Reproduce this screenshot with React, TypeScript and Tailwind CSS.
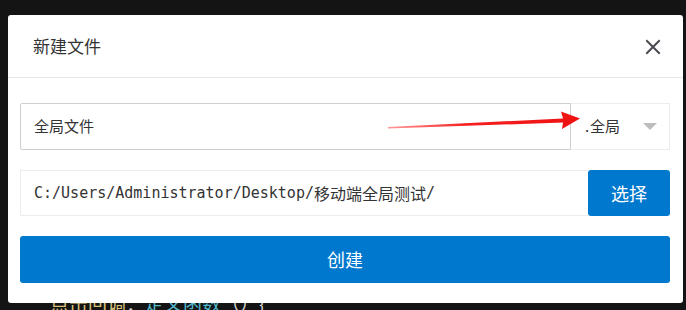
import React from "react";

export default function App() {
  return (
    <div className="relative w-[686px] h-[310px] overflow-hidden bg-[#141414]" style={{ fontFamily: '"Noto Sans", "Noto Sans CJK SC", sans-serif' }}>
      {/* background code editor content */}
      <div className="flex flex-col pl-[50px] pt-[291px] text-[19px] leading-[24px]" style={{ fontFamily: '"Noto Sans CJK SC", sans-serif' }}>
        <div className="flex whitespace-nowrap">
          <span className="text-[#d8c27c]">点击回调</span>
          <span className="text-[#d4d4d4]">：</span>
          <span className="text-[#4fb7c9]">定义函数</span>
          <span className="text-[#d4d4d4]">（）{"{"}</span>
        </div>
      </div>

      {/* modal */}
      <div className="absolute left-[8px] top-[15px] w-[675px] h-[288px] bg-white rounded-[3px] flex flex-col">
        <div className="h-[63px] flex items-center justify-between pl-[25px] pr-[22px] border-b border-[#e8e8e8]">
          <span className="text-[17px] text-[#333]" style={{ fontFamily: '"Noto Sans CJK SC", sans-serif' }}>新建文件</span>
          <svg width="16" height="16" viewBox="0 0 16 16" className="mt-[1px]">
            <path d="M2 2 L14 14 M14 2 L2 14" stroke="#4a4a52" strokeWidth="2" strokeLinecap="square" />
          </svg>
        </div>
        <div className="flex flex-col gap-[20px] px-[12px] pt-[25px] pb-[20px]">
          <div className="flex h-[47px] w-[650px]">
            <div className="flex-1 flex items-center pl-[13px] border border-[#cfcfcf] rounded-l-[2px] text-[15px] text-[#333]" style={{ fontFamily: '"Noto Sans CJK SC", sans-serif' }}>
              全局文件
            </div>
            <div className="w-[99px] flex items-center justify-between pl-[14px] pr-[12px] border border-l-0 border-[#ececec] text-[15px] text-[#333]" style={{ fontFamily: '"Noto Sans CJK SC", sans-serif' }}>
              <span>.&#8202;全局</span>
              <svg width="14" height="8" viewBox="0 0 14 8" className="mt-[1px]">
                <polygon points="0,0 14,0 7,7" fill="#bdbdbd" />
              </svg>
            </div>
          </div>
          <div className="flex h-[46px] w-[650px]">
            <div className="flex-1 flex items-center pl-[13px] border border-r-0 border-[#ececec] text-[15px] text-[#333]" style={{ fontFamily: '"DejaVu Sans Mono", "Noto Sans CJK SC", monospace' }}>
              C:/Users/Administrator/Desktop/<span className="text-[16px]" style={{ fontFamily: '"Noto Sans CJK SC", sans-serif' }}>移动端全局测试</span>/
            </div>
            <button className="w-[82px] bg-[#0078cd] rounded-[3px] text-white text-[18px] flex items-center justify-center" style={{ fontFamily: '"Noto Sans CJK SC", sans-serif' }}>
              选择
            </button>
          </div>
          <button className="h-[47px] w-[650px] bg-[#0078cd] rounded-[3px] text-white text-[18px] flex items-center justify-center" style={{ fontFamily: '"Noto Sans CJK SC", sans-serif' }}>
            创建
          </button>
        </div>
      </div>

      {/* red annotation arrow */}
      <svg className="absolute left-0 top-0" width="686" height="310" viewBox="0 0 686 310">
        <defs>
          <linearGradient id="ag" x1="388" y1="0" x2="580" y2="0" gradientUnits="userSpaceOnUse">
            <stop offset="0" stopColor="#ff5050" stopOpacity="0.6" />
            <stop offset="0.4" stopColor="#f52020" />
            <stop offset="1" stopColor="#ee1111" />
          </linearGradient>
        </defs>
        <polygon points="388,127 563,118.5 561,111.5 580,118.5 562,129 563,122.5 388,128.5" fill="url(#ag)" />
      </svg>
    </div>
  );
}
